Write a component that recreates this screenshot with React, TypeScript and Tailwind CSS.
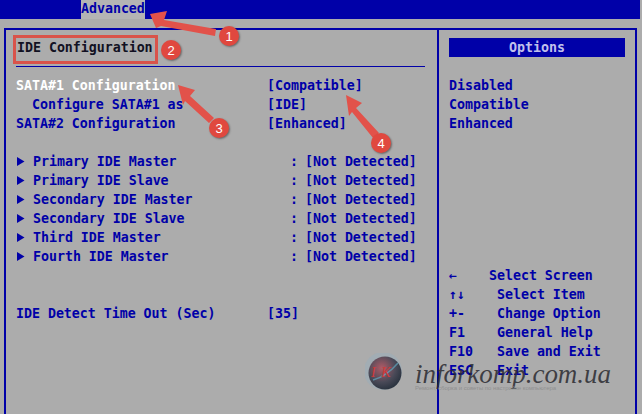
import React from 'react'

const drives = [
  'Primary IDE Master',
  'Primary IDE Slave',
  'Secondary IDE Master',
  'Secondary IDE Slave',
  'Third IDE Master',
  'Fourth IDE Master',
]

const help = [
  { key: '←', text: 'Select Screen', cls: 'w-[40px]' },
  { key: '↑↓', text: 'Select Item', cls: 'w-[48px]' },
  { key: '+-', text: 'Change Option', cls: 'w-[48px]' },
  { key: 'F1', text: 'General Help', cls: 'w-[48px]' },
  { key: 'F10', text: 'Save and Exit', cls: 'w-[48px]' },
  { key: 'ESC', text: 'Exit', cls: 'w-[48px]' },
]

function Badge({ n, className }: { n: number; className: string }) {
  return (
    <div
      className={`absolute w-[20px] h-[20px] rounded-full bg-[#e0483f] text-white flex items-center justify-center text-[13px] font-normal shadow-[1px_1px_2px_rgba(0,0,0,0.4)] font-['Liberation_Sans',sans-serif] ${className}`}
    >
      {n}
    </div>
  )
}

function App() {
  return (
    <div className="relative w-[642px] h-[414px] overflow-hidden bg-[#acacac] font-['DejaVu_Sans_Mono',monospace] font-bold text-[13.3px] leading-[19px] text-[#0000a8] tracking-[-0.03px]">
      <div className="h-[19px] w-[640px] bg-[#0000a8] pl-[81px]">
        <div className="w-[64px] h-[19px] bg-[#b4b4b4] leading-[18px]">Advanced</div>
      </div>

      <div className="mt-[9px] ml-[4px] w-[633px] h-[400px] border-2 border-b-0 border-[#0000a8] flex">
        <div className="w-[433px] shrink-0 border-r-2 border-[#0000a8] pl-[10px] pt-[8px]">
          <div className="h-[19px] text-[#111122] pl-[1px]">IDE Configuration</div>
          <div className="mt-[9px] w-[409px] h-[1px] bg-[#0000a8]" />

          <div className="mt-[9px]">
            <div className="flex h-[19px]">
              <span className="w-[251px] text-white">SATA#1 Configuration</span>
              <span>[Compatible]</span>
            </div>
            <div className="flex h-[19px]">
              <span className="w-[251px] pl-[16px]">Configure SATA#1 as</span>
              <span>[IDE]</span>
            </div>
            <div className="flex h-[19px]">
              <span className="w-[251px]">SATA#2 Configuration</span>
              <span>[Enhanced]</span>
            </div>
          </div>

          <div className="mt-[19px]">
            {drives.map((d) => (
              <div key={d} className="flex h-[19px] items-center">
                <svg width="17" height="19" viewBox="0 0 17 19" className="shrink-0">
                  <path d="M1 5 L8.5 9.5 L1 14 Z" fill="#0000a8" />
                </svg>
                <span className="w-[257px]">{d}</span>
                <span className="w-[15px]">:</span>
                <span>[Not Detected]</span>
              </div>
            ))}
          </div>

          <div className="flex h-[19px] mt-[38px]">
            <span className="w-[251px]">IDE Detect Time Out (Sec)</span>
            <span>[35]</span>
          </div>
        </div>

        <div className="flex-1 pl-[10px] pt-[8px]">
          <div className="w-[176px] h-[19px] bg-[#0000a8] text-[#c0c0ec] text-center">Options</div>
          <div className="mt-[19px]">
            <div className="h-[19px]">Disabled</div>
            <div className="h-[19px]">Compatible</div>
            <div className="h-[19px]">Enhanced</div>
          </div>
          <div className="mt-[133px]">
            {help.map((h) => (
              <div key={h.key} className="flex h-[19px]">
                <span className={h.cls}>{h.key}</span>
                <span>{h.text}</span>
              </div>
            ))}
          </div>
        </div>
      </div>

      {/* annotations */}
      <div className="absolute left-[13px] top-[35px] w-[145px] h-[29px] border-[3px] border-[#d9534a]" />
      <svg className="absolute left-0 top-0" width="642" height="414" viewBox="0 0 642 414">
        <path d="M150 14 L167 11 L164 20 L216 29 L215 36 L161 26 L156 28 Z" fill="#e2524a" />
        <path d="M178 85 L195 90 L190 96 L214 118 L209 123 L185 101 L183 105 Z" fill="#e2524a" />
        <path d="M346 95 L362 103 L356 108 L379 133 L373 138 L352 112 L349 116 Z" fill="#e2524a" />
      </svg>
      <Badge n={1} className="left-[219px] top-[26px]" />
      <Badge n={2} className="left-[161px] top-[40px]" />
      <Badge n={3} className="left-[209px] top-[118px]" />
      <Badge n={4} className="left-[371px] top-[133px]" />

      {/* watermark */}
      <svg className="absolute left-[365px] top-[353px]" width="40" height="40" viewBox="0 0 40 40">
        <defs>
          <radialGradient id="wm" cx="0.4" cy="0.35" r="0.7">
            <stop offset="0" stopColor="#b05a66" />
            <stop offset="0.6" stopColor="#4a4a58" />
            <stop offset="1" stopColor="#26303c" />
          </radialGradient>
        </defs>
        <circle cx="18" cy="18" r="19" fill="#8fb0c4" opacity="0.35" />
        <circle cx="20" cy="20" r="16.5" fill="url(#wm)" />
        <path d="M8 27 C16 25 26 18 33 10" stroke="#5fa8c0" strokeWidth="1.5" fill="none" opacity="0.7" />
      </svg>
      <div className="absolute left-[371px] top-[364px] font-['Liberation_Serif',serif] italic font-normal text-[14px] leading-[18px] text-[#d03a3a] tracking-[1px]">
        I K
      </div>
      <div className="absolute left-[415px] top-[358px] font-['Liberation_Serif',serif] italic font-normal text-[27px] leading-[32px] text-[#2a2a30]/85 whitespace-nowrap">
        inforkomp.com.ua
      </div>
      <div className="absolute left-[415px] top-[384px] font-['Liberation_Sans',sans-serif] font-normal text-[6px] leading-[8px] text-[#909090] whitespace-nowrap">
        Ремонт, сборка и советы по настройке компьютера
      </div>
    </div>
  )
}

export default App
